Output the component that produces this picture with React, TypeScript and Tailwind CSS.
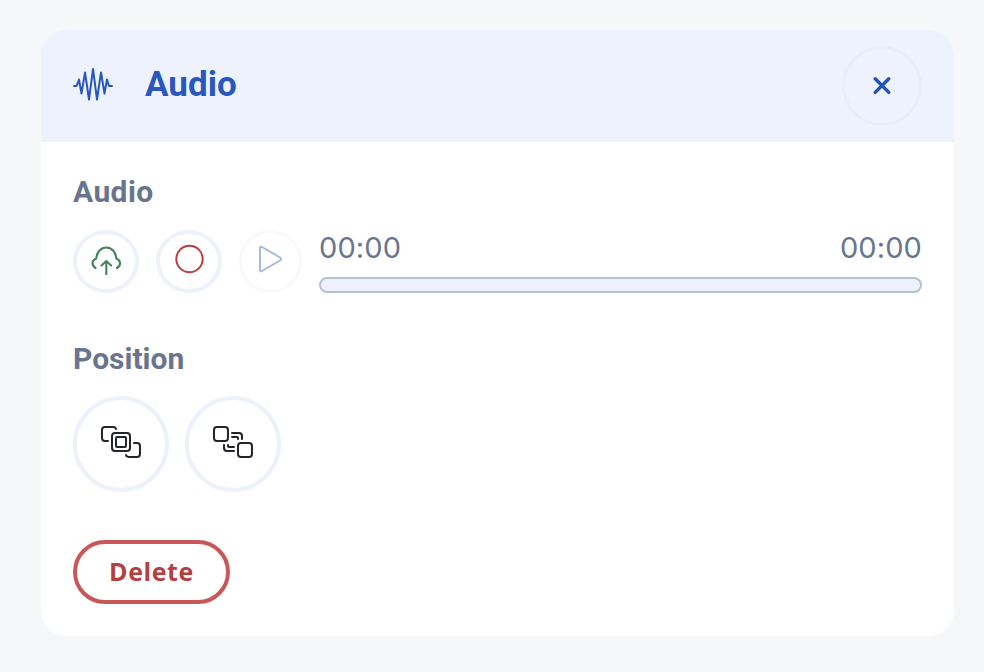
import React from "react";
import clsx from "clsx";

interface RoundButtonProps {
  label: string;
  className?: string;
  disabled?: boolean;
  children: React.ReactNode;
}

const RoundButton: React.FC<RoundButtonProps> = ({ label, className, disabled, children }) => (
  <button
    type="button"
    aria-label={label}
    disabled={disabled}
    className={clsx(
      "flex shrink-0 items-center justify-center rounded-[50%] border-[#edf1fa]",
      className
    )}
  >
    {children}
  </button>
);

const WaveIcon = () => (
  <svg className="mb-1 -ml-px" width="42" height="36" viewBox="0 0 42 36" fill="none" stroke="#2957bd" strokeWidth="2" strokeLinecap="round" strokeLinejoin="round">
    <path d="M2 20h2.500L7 13.500l2.500 14L13 6.500 17 33.500 21 3l4 30.500 4-27 3.500 21 2.500-14 2 6.500h3" />
  </svg>
);

const CloseIcon = () => (
  <svg className="mb-px" width="20" height="20" viewBox="0 0 20 20" fill="none" stroke="#2353b8" strokeWidth="3.4" strokeLinecap="round">
    <path d="m3.2 2.8 13.6 13.6M16.8 2.8 3.2 16.4" />
  </svg>
);

const UploadIcon = () => (
  <svg className="mb-[3px]" width="32" height="30" viewBox="0 0 32 30" fill="none" stroke="#43835f" strokeWidth="2.1" strokeLinecap="round" strokeLinejoin="round">
    <path d="M5.500 23C1.500 20.500 1.300 15.500 6.300 13.500 6.800 7 11 2.500 16.300 2.500S25.800 7 26.300 13.500c5 2 4.700 7 .7 9.500" />
    <path d="M16.300 29.300V17M11.500 20.500l4.800-4.500 4.800 4.500" />
  </svg>
);

const RecordIcon = () => (
  <svg className="mb-[5px]" width="30" height="30" viewBox="0 0 30 30" fill="none" stroke="#b6403f" strokeWidth="2">
    <circle cx="15.500" cy="15" r="13.200" />
  </svg>
);

const PlayIcon = () => (
  <svg className="mr-px mb-[5px]" width="26" height="30" viewBox="0 0 26 30" fill="none" stroke="#a7bbdf" strokeWidth="2" strokeLinejoin="round">
    <path d="M3 4v22q0 2 2 1l18-10.500q2-1.500 0-3L5 3q-2-1-2 1Z" />
  </svg>
);

const BringForwardIcon = () => (
  <svg className="mb-1" width="42" height="34" viewBox="0 0 42 34" fill="none" stroke="#24242b" strokeWidth="2" strokeLinecap="round" strokeLinejoin="round">
    <rect x="12" y="8" width="18" height="18" rx="3" />
    <rect x="16" y="12" width="10" height="10" rx="1" />
    <path d="M16 4q-.5-2-3-2H5Q2 2 2 5v8q0 3 3 3h3" />
    <path d="M34 18h3q3 0 3 3v8q0 3-3 3h-8q-2.500 0-3-2" />
  </svg>
);

const SendBackIcon = () => (
  <svg className="mb-1" width="42" height="34" viewBox="0 0 42 34" fill="none" stroke="#24242b" strokeWidth="2" strokeLinecap="round" strokeLinejoin="round">
    <rect x="2" y="2" width="14" height="14" rx="3" />
    <rect x="26" y="18" width="14" height="14" rx="3" />
    <path d="M20 8h7q3 0 3 3v3" />
    <path d="M20 12h5q1 0 1 1v1" />
    <path d="M12 20v3q0 3 3 3h7" />
    <path d="M16 20v1q0 1 1 1h5" />
  </svg>
);

export default function App() {
  return (
    <main className="h-[672px] bg-[#f6f7f9] pt-[30px] pr-[30px] pl-[41px] font-['Roboto',sans-serif]">
      <section className="h-[606px] overflow-hidden rounded-[26px] bg-white">
        <header className="flex h-28 items-center bg-[#edf2fc] pr-8 pl-8">
          <WaveIcon />
          <h1 className="mb-[3px] ml-[31px] text-[35px] leading-none font-bold text-[#2957bd]">Audio</h1>
          <RoundButton label="Close" className="ml-auto h-20 w-20 border-[3px] !border-[#e8eef9]">
            <CloseIcon />
          </RoundButton>
        </header>

        <div className="px-8 pt-[31px]">
          <h2 className="h-[57px] text-[30px] leading-[38px] font-bold tracking-[0.4px] text-[#69758f]">Audio</h2>
          <div className="flex h-[63px]">
            <RoundButton label="Upload" className="h-[63px] w-[66px] border-4">
              <UploadIcon />
            </RoundButton>
            <RoundButton label="Record" className="ml-[17px] h-[63px] w-[66px] border-4">
              <RecordIcon />
            </RoundButton>
            <RoundButton label="Play" disabled className="ml-[17px] h-[63px] w-[63px] border-[3px] !border-[#f7f9fd]">
              <PlayIcon />
            </RoundButton>
            <div className="ml-[17px] flex flex-1 flex-col justify-between">
              <div className="flex justify-between font-['Inter',sans-serif] text-[29px] leading-9 tracking-[0.1px] text-[#69758f]">
                <span>00:00</span>
                <span>00:00</span>
              </div>
              <div className="h-4 rounded-full border-2 border-[#b8c0ce] bg-[#edf2fc]" />
            </div>
          </div>

          <h2 className="mt-[47px] h-14 text-[30px] leading-[38px] font-bold text-[#69758f]">Position</h2>
          <div className="flex gap-4">
            <RoundButton label="Bring forward" className="h-24 w-24 border-4">
              <BringForwardIcon />
            </RoundButton>
            <RoundButton label="Send backward" className="h-24 w-24 border-4">
              <SendBackIcon />
            </RoundButton>
          </div>

          <button
            type="button"
            className="mt-12 flex h-16 w-[157px] items-center justify-center rounded-full border-4 border-[#c95758] font-['Open_Sans',sans-serif] text-[25px] font-bold tracking-[0.6px] text-[#b4403f]"
          >
            Delete
          </button>
        </div>
      </section>
    </main>
  );
}
